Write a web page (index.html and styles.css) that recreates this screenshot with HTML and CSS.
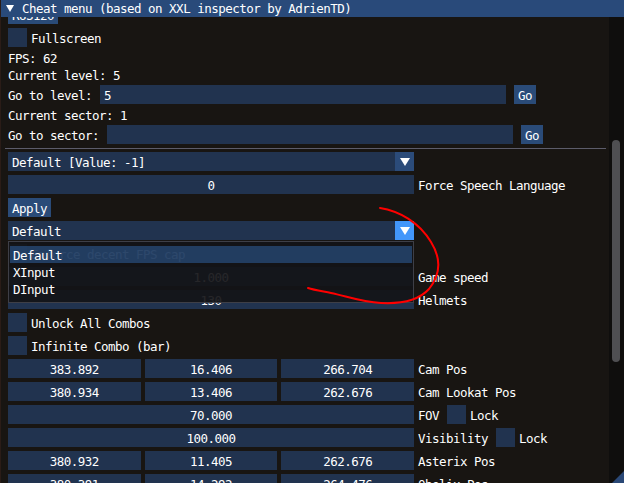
FILE: index.html
```html
<!DOCTYPE html>
<html>
<head>
<meta charset="utf-8">
<link rel="stylesheet" href="styles.css">
</head>
<body>
<div class="win">
  <div class="title"><span class="tri"></span><span>Cheat menu (based on XXL inspector by AdrienTD)</span></div>
  <div class="main">
    <div class="content">
      <div class="row"><span class="btn">RUS120</span></div>
      <div class="row"><span class="chk"></span><span class="lbl">Fullscreen</span></div>
      <div class="text">FPS: 62</div>
      <div class="text">Current level: 5</div>
      <div class="row gap8"><span class="lbl">Go to level:</span><span class="input">5</span><span class="btn">Go</span></div>
      <div class="text">Current sector: 1</div>
      <div class="row gap8"><span class="lbl">Go to sector:</span><span class="input"></span><span class="btn">Go</span></div>
      <div class="sep"></div>
      <div class="row"><span class="combo"><span class="cval">Default [Value: -1]</span><span class="arrow"><span class="down"></span></span></span></div>
      <div class="row"><span class="field">0</span><span class="lbl">Force Speech Language</span></div>
      <div class="row"><span class="btn">Apply</span></div>
      <div class="row">
        <span class="combo open"><span class="cval">Default</span><span class="arrow hot"><span class="down"></span></span>
          <span class="popup">
            <span class="item sel">Default</span>
            <span class="item">XInput</span>
            <span class="item">DInput</span>
          </span>
        </span>
      </div>
      <div class="row"><span class="chk"></span><span class="lbl">Enforce decent FPS cap</span></div>
      <div class="row"><span class="field">1.000</span><span class="lbl">Game speed</span></div>
      <div class="row"><span class="field">130</span><span class="lbl">Helmets</span></div>
      <div class="row"><span class="chk"></span><span class="lbl">Unlock All Combos</span></div>
      <div class="row"><span class="chk"></span><span class="lbl">Infinite Combo (bar)</span></div>
      <div class="row"><span class="triple"><span class="cell">383.892</span><span class="cell">16.406</span><span class="cell">266.704</span></span><span class="lbl">Cam Pos</span></div>
      <div class="row"><span class="triple"><span class="cell">380.934</span><span class="cell">13.406</span><span class="cell">262.676</span></span><span class="lbl">Cam Lookat Pos</span></div>
      <div class="row"><span class="field">70.000</span><span class="lbl">FOV</span><span class="chk ml4"></span><span class="lbl">Lock</span></div>
      <div class="row"><span class="field">100.000</span><span class="lbl">Visibility</span><span class="chk ml4"></span><span class="lbl">Lock</span></div>
      <div class="row"><span class="triple"><span class="cell">380.932</span><span class="cell">11.405</span><span class="cell">262.676</span></span><span class="lbl">Asterix Pos</span></div>
      <div class="row"><span class="triple"><span class="cell">380.391</span><span class="cell">14.292</span><span class="cell">264.476</span></span><span class="lbl">Obelix Pos</span></div>
    </div>
    <div class="scrollbar"><div class="grab"></div></div>
  </div>
  <div class="grip"></div>
  <svg class="annot" width="624" height="483" viewBox="0 0 624 483">
    <path d="M379 208 C398 211 418 222 430 242 C440 258 440 274 428 289 C418 300 400 304 380 303 C360 302 345 296 330 293 C320 291 313 290 307 288" fill="none" stroke="#ff0000" stroke-width="2" stroke-linecap="round"/>
  </svg>
</div>
</body>
</html>
```
FILE: styles.css
```css
* { box-sizing: border-box; }
html, body { margin: 0; padding: 0; background: #181512; }
.win {
  position: relative;
  width: 624px;
  height: 483px;
  overflow: hidden;
  background: #181512;
  color: #ffffff;
  font-family: "DejaVu Sans Mono", "Liberation Mono", monospace;
  font-size: 12.5px;
  letter-spacing: -0.52px;
  line-height: 13px;
  border-left: 1px solid #2a1c17;
}
.title {
  position: relative;
  z-index: 2;
  height: 17px;
  background: #294a7a;
  display: flex;
  align-items: center;
  padding-left: 5px;
  white-space: pre;
}
.tri {
  width: 0; height: 0;
  border-left: 4px solid transparent;
  border-right: 4px solid transparent;
  border-top: 7px solid #ffffff;
  margin-right: 8px;
}
.main {
  display: flex;
  height: 466px;
  overflow: hidden;
}
.content {
  width: 608px;
  margin-top: -12px;
  padding-left: 7px;
  display: flex;
  flex-direction: column;
  gap: 4px;
}
.scrollbar {
  width: 15px;
  background: #0f0e0d;
  padding-top: 123px;
  padding-left: 3px;
}
.grab {
  width: 8px;
  height: 222px;
  background: #4f4f52;
  border-radius: 4px;
}
.row {
  display: flex;
  height: 19px;
  gap: 4px;
  white-space: pre;
  flex-shrink: 0;
}
.row.gap8 { gap: 8px; }
.text { height: 13px; padding-top: 1px; white-space: pre; flex-shrink: 0; }
.lbl { padding-top: 4px; }
.btn {
  background: #2a4b78;
  padding: 4px 4px 0;
  height: 19px;
}
.chk {
  width: 19px; height: 19px;
  background: #21334f;
  flex-shrink: 0;
}
.ml4 { margin-left: 4px; }
.input {
  width: 406px;
  background: #21334f;
  padding: 4px 4px 0;
}
.field {
  width: 406px;
  background: #21334f;
  padding-top: 4px;
  text-align: center;
  flex-shrink: 0;
}
.triple {
  width: 406px;
  display: flex;
  gap: 4px;
  flex-shrink: 0;
}
.cell {
  flex: 1;
  background: #21334f;
  padding-top: 4px;
  text-align: center;
}
.sep {
  height: 1px;
  margin: 0 0 -1px -3px;
  width: 601px;
  background: #5c5c6a;
  flex-shrink: 0;
}
.combo {
  position: relative;
  width: 406px;
  display: flex;
  background: #21334f;
  flex-shrink: 0;
}
.cval { flex: 1; padding: 4px 4px 0; }
.arrow {
  width: 19px; height: 19px;
  background: #2b4b79;
  display: flex;
  align-items: center;
  justify-content: center;
}
.arrow.hot { background: #4296fa; }
.down {
  width: 0; height: 0;
  border-left: 5px solid transparent;
  border-right: 5px solid transparent;
  border-top: 8px solid #ffffff;
  margin-top: 1px;
}
.popup {
  position: absolute;
  z-index: 3;
  left: 0;
  top: 20px;
  width: 406px;
  height: 62px;
  background: rgba(19, 20, 23, 0.92);
  border: 1px solid #3e3f47;
  padding: 4px 1px;
  display: flex;
  flex-direction: column;
}
.item {
  height: 17px;
  padding: 3px 3px 0;
}
.item.sel { background: rgba(56, 120, 200, 0.42); }
.grip {
  position: absolute;
  right: 0;
  bottom: 0;
  width: 12px;
  height: 12px;
  background: #2a4876;
  clip-path: polygon(100% 0, 100% 100%, 0 100%);
  z-index: 4;
}
.annot {
  position: absolute;
  left: 0;
  top: 0;
  z-index: 5;
  pointer-events: none;
}
```
